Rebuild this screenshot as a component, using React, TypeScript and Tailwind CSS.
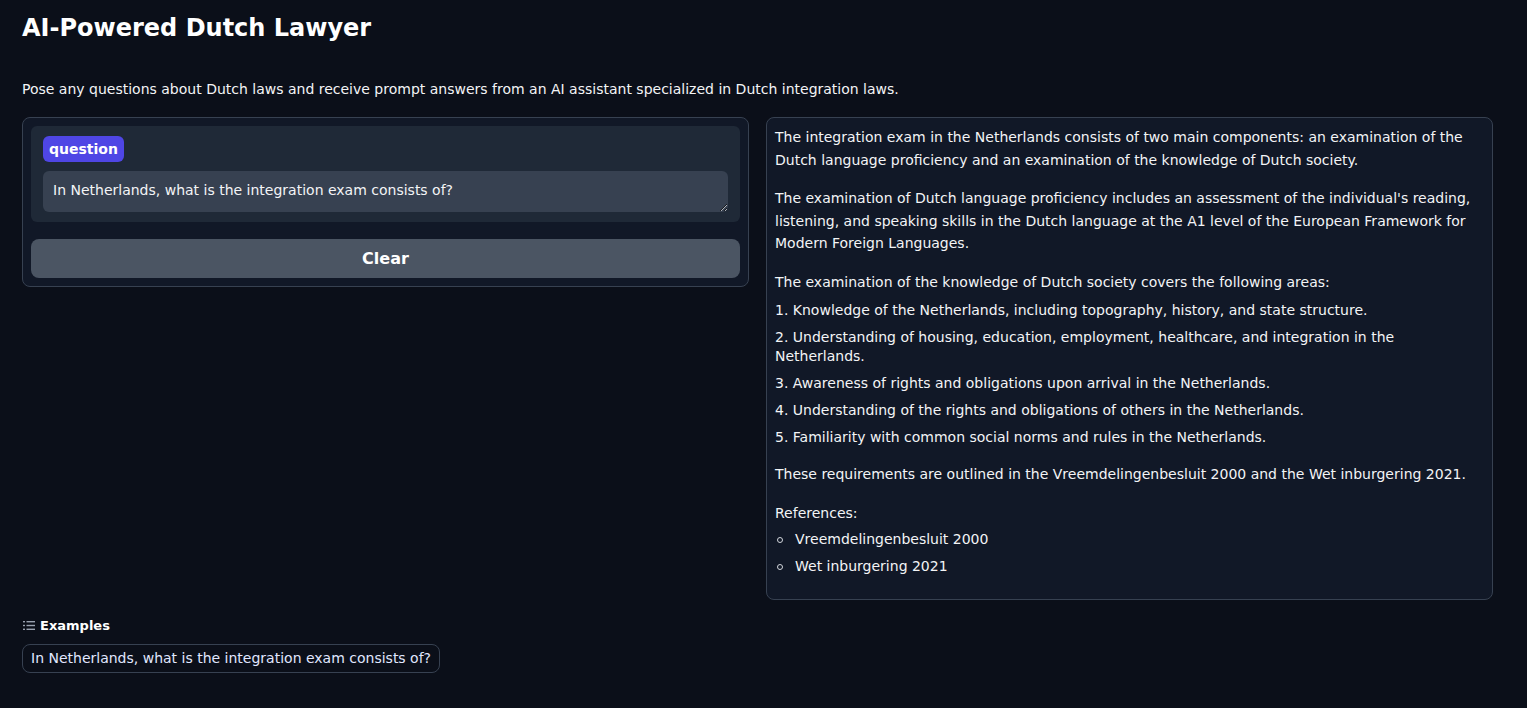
import { useState } from "react"

const font = { fontFamily: '"DejaVu Sans", "Noto Sans", sans-serif' }

function ListIcon() {
  return (
    <svg width="12" height="11" viewBox="0 0 12 11" className="text-gray-400">
      <rect x="0" y="1" width="2" height="1.4" fill="currentColor" />
      <rect x="3.5" y="1" width="8.5" height="1.4" fill="currentColor" />
      <rect x="0" y="4.8" width="2" height="1.4" fill="currentColor" />
      <rect x="3.5" y="4.8" width="8.5" height="1.4" fill="currentColor" />
      <rect x="0" y="8.6" width="2" height="1.4" fill="currentColor" />
      <rect x="3.5" y="8.6" width="8.5" height="1.4" fill="currentColor" />
    </svg>
  )
}

export default function App() {
  const [question, setQuestion] = useState("In Netherlands, what is the integration exam consists of?")

  const items = [
    "1. Knowledge of the Netherlands, including topography, history, and state structure.",
    "2. Understanding of housing, education, employment, healthcare, and integration in the Netherlands.",
    "3. Awareness of rights and obligations upon arrival in the Netherlands.",
    "4. Understanding of the rights and obligations of others in the Netherlands.",
    "5. Familiarity with common social norms and rules in the Netherlands.",
  ]

  return (
    <div style={font} className="min-h-screen bg-[#0b0f19] text-[#f3f4f6] pl-[22px] pr-[34px] pt-[12px] text-[14px]">
      <h1 className="text-[24px] font-semibold text-white leading-[32px]">AI-Powered Dutch Lawyer</h1>

      <p className="mt-[34px] leading-[22px]">
        Pose any questions about Dutch laws and receive prompt answers from an AI assistant specialized in Dutch integration laws.
      </p>

      <div className="flex items-start gap-[17px] mt-[17px]">
        <div className="flex-1 border border-[#374151] rounded-lg bg-[#111827] p-2">
          <div className="bg-[#1f2937] rounded-md px-3 pt-[10px] pb-[10px]">
            <span className="inline-flex items-center h-[26px] px-[6px] rounded-md bg-[#4f46e5] text-white font-semibold text-[14px]">
              question
            </span>
            <textarea
              value={question}
              onChange={(e) => setQuestion(e.target.value)}
              rows={1}
              style={font}
              className="mt-[9px] block w-full h-[41px] bg-[#374151] rounded-md px-[10px] py-[9px] text-[14px] leading-[20px] text-[#f3f4f6] outline-none resize-y"
            />
          </div>
          <button className="mt-[17px] w-full h-[39px] rounded-lg bg-[#4b5563] text-white font-semibold text-[16px]">
            Clear
          </button>
        </div>

        <div className="flex-1 border border-[#374151] rounded-lg bg-[#111827] px-2 pt-[8px] pb-[23px]">
          <p className="leading-[22.5px]">
            The integration exam in the Netherlands consists of two main components: an examination of the Dutch language proficiency and an examination of the knowledge of Dutch society.
          </p>
          <p className="leading-[22.5px] mt-4">
            The examination of Dutch language proficiency includes an assessment of the individual's reading, listening, and speaking skills in the Dutch language at the A1 level of the European Framework for Modern Foreign Languages.
          </p>
          <p className="leading-[22.5px] mt-4">The examination of the knowledge of Dutch society covers the following areas:</p>
          <div className="mt-[8px] flex flex-col gap-2">
            {items.map((t) => (
              <div key={t} className="leading-[19px]">{t}</div>
            ))}
          </div>
          <p className="leading-[22.5px] mt-4">
            These requirements are outlined in the Vreemdelingenbesluit 2000 and the Wet inburgering 2021.
          </p>
          <p className="leading-[22.5px] mt-4">References:</p>
          <div className="mt-[6px] flex flex-col gap-2">
            {["Vreemdelingenbesluit 2000", "Wet inburgering 2021"].map((t) => (
              <div key={t} className="flex items-center leading-[19px]">
                <span className="ml-[2px] w-[6px] h-[6px] rounded-full border border-[#d1d5db]" />
                <span className="ml-[12px]">{t}</span>
              </div>
            ))}
          </div>
        </div>
      </div>

      <div className="mt-[16px] flex items-center gap-[5px] ml-[1px]">
        <ListIcon />
        <span className="text-[13px] font-semibold text-white">Examples</span>
      </div>
      <button className="mt-[8px] h-[29px] px-2 border border-[#374151] rounded-lg text-[14px] text-[#e0e7ff]">
        In Netherlands, what is the integration exam consists of?
      </button>
    </div>
  )
}
